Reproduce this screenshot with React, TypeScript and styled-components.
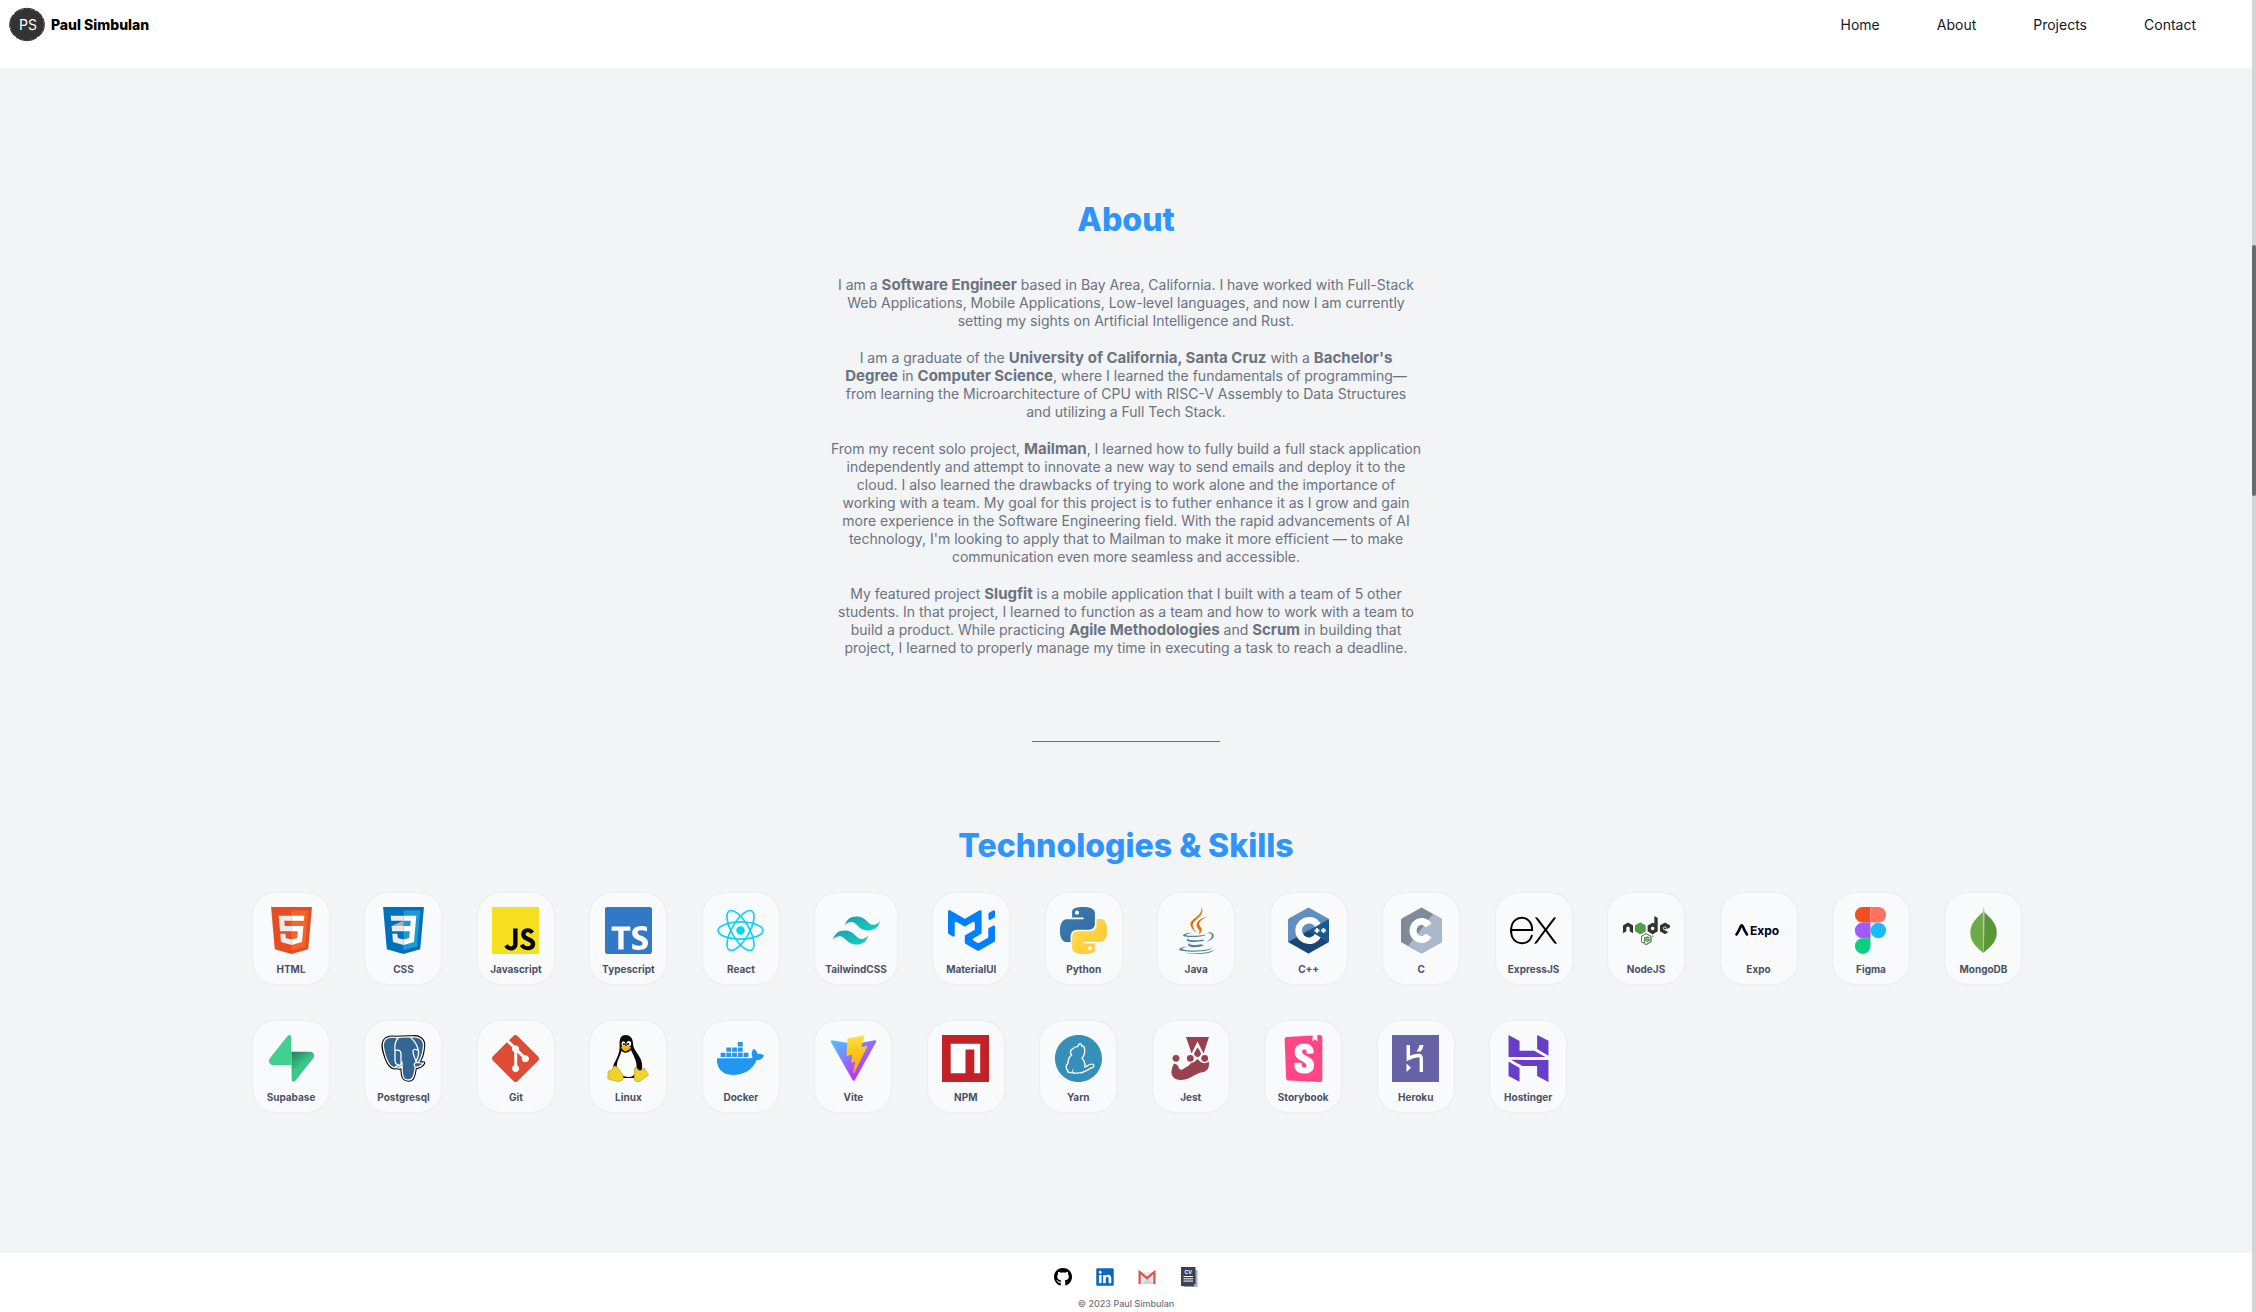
import React from "react";
import styled, { createGlobalStyle } from "styled-components";
import {
  SiExpress,
  SiGit,
  SiHostinger,
  SiJavascript,
  SiMui,
  SiStorybook,
  SiTypescript,
  SiYarn,
} from "react-icons/si";
import { FaDocker, FaGithub, FaJava, FaLinkedin, FaNode } from "react-icons/fa";

const GlobalStyle = createGlobalStyle`
  *, *::before, *::after { box-sizing: border-box; }
  body {
    margin: 0;
    padding-right: 4px;
    background: #f2f4f6;
    color: #111827;
    font-family: Inter, "Liberation Sans", sans-serif;
    font-size: 14px;
    line-height: 18px;
  }
`;

const Page = styled.div`
  display: flex;
  flex-direction: column;
  min-height: 100vh;
`;

const Header = styled.header`
  display: flex;
  align-items: center;
  justify-content: space-between;
  padding: 7px 56px 25px 9px;
  background: #fff;
`;

const Brand = styled.a`
  display: flex;
  align-items: center;
  gap: 6px;
  color: #000;
  font-size: 14px;
  font-weight: 800;
  text-decoration: none;
`;

const Nav = styled.nav`
  display: flex;
  gap: 57px;
`;

const NavLink = styled.a`
  color: #111827;
  font-size: 14px;
  text-decoration: none;
`;

const Main = styled.main`
  display: flex;
  flex: 1;
  flex-direction: column;
  align-items: center;
  padding-top: 132px;
`;

const Heading = styled.h2`
  margin: 0;
  color: #2f95fd;
  font-size: 32px;
  font-weight: 800;
  line-height: 40px;
`;

const Bio = styled.div`
  display: flex;
  flex-direction: column;
  gap: 19px;
  max-width: 592px;
  margin-top: 36px;
  color: #6b7280;
  font-size: 14px;
  text-align: center;

  p { margin: 0; }
  b { font-size: 15px; line-height: 16px; }
`;

const Divider = styled.hr`
  width: 188px;
  margin: 84px 0;
  border: 0;
  border-top: 1px solid #6b7280;
`;

const SkillList = styled.ul`
  display: flex;
  flex-wrap: wrap;
  gap: 37px 2.05%;
  width: 100%;
  margin: 27px 0 0;
  padding: 0 220px 0 253px;
  list-style: none;
`;

const SkillCard = styled.li`
  display: flex;
  flex-direction: column;
  align-items: center;
  gap: 7px;
  min-width: 76px;
  padding: 14px 10px 7px;
  border-radius: 22px;
  background: #f9fafc;
  box-shadow: 0 0 2px rgba(0, 0, 0, 0.1);
  color: #4b5066;
  font-size: 10px;
  font-weight: 700;
  line-height: 16px;

  svg { display: block; width: 47px; height: 47px; }
`;

const Backed = styled.span<{ $color: string; $back: string }>`
  display: block;
  padding: 2px;
  color: ${(p) => p.$color};
  background: linear-gradient(${(p) => p.$back}, ${(p) => p.$back}) content-box;
  svg { margin: -2px; }
`;

const Footer = styled.footer`
  display: flex;
  flex-direction: column;
  align-items: center;
  gap: 8px;
  padding: 14px 0 0;
  height: 59px;
  background: #fff;
  color: #6b7280;
  font-size: 9px;
  font-weight: 500;
`;

const Socials = styled.div`
  display: flex;
  gap: 24px;

  a { display: block; color: #000; }
  svg { display: block; width: 18px; height: 20px; }
`;

const ScrollTrack = styled.div`
  position: fixed;
  top: 0;
  right: 0;
  bottom: 0;
  width: 4px;
  padding-top: 245px;
  background: #d4d4d4;
`;

const ScrollThumb = styled.div`
  height: 251px;
  border-radius: 2px;
  background: #6b6b6b;
`;

const BrandMark = () => (
  <svg width="36" height="36" viewBox="0 0 36 36" aria-hidden="true">
    <ellipse cx="18" cy="17.5" rx="17" ry="15.8" fill="#333" />
    <ellipse cx="18" cy="17.5" rx="17.4" ry="16.2" fill="none" stroke="#333" strokeWidth="1" strokeDasharray="14 2 22 1 9 1" />
    <text x="19" y="23" fill="#fff" fontSize="14" fontWeight="400" textAnchor="middle">PS</text>
  </svg>
);

const Html = () => (
  <svg viewBox="0 0 115 115">
    <g transform="translate(-.7 -1.500) scale(.91 .92)">
      <path fill="#E44D26" d="M19.037 113.876L9.032 1.661h109.936l-10.016 112.198-45.019 12.480z" />
      <path fill="#F16529" d="M64 116.800l36.378-10.086 8.559-95.878H64z" />
      <path fill="#EBEBEB" d="M64 52.455H45.788L44.530 38.361H64V24.599H29.489l.33 3.692 3.382 37.927H64zm0 35.743l-.061.017-15.327-4.140-.979-10.975H33.816l1.928 21.609 28.193 7.826.063-.017z" />
      <path fill="#fff" d="M63.952 52.455v13.763h16.947l-1.597 17.849-15.350 4.143v14.319l28.215-7.820.207-2.325 3.234-36.233.335-3.696h-3.708zm0-27.856v13.762h33.244l.276-3.092.628-6.978.329-3.692z" />
    </g>
  </svg>
);

const Css = () => (
  <svg viewBox="0 0 115 115">
    <g transform="translate(-.7 -1.500) scale(.91 .92)">
      <path fill="#0070BA" d="M19.037 113.876L9.032 1.661h109.936l-10.016 112.198-45.019 12.480z" />
      <path fill="#1C9AD6" d="M64 116.800l36.378-10.086 8.559-95.878H64z" />
      <path fill="#EBEBEB" d="M64 24.600H29.500l1.200 13.800H64zM64 52.400H32l1.200 13.800H64zM64 88.200l-15.400-4.100-1-11H33.800l1.900 21.600L64 102.500z" />
      <path fill="#B3B3B3" d="M64 38.400v14H32z" />
      <path fill="#fff" d="M64 24.600h34.500l-1.300 13.800L94.600 66.200l-2.400 28.500L64 102.500V88.200l15.300-4.100 1.600-17.900H64V52.400h18.200l1.300-14H64z" />
    </g>
  </svg>
);

const ReactLogo = () => (
  <svg viewBox="0 0 48 48" fill="none" stroke="#08D5F8" strokeWidth="1.700">
    <circle cx="24" cy="24" r="4.300" fill="#08D5F8" stroke="none" />
    {[0, 60, 120].map((a) => (
      <ellipse key={a} cx="24" cy="24" rx="23" ry="8.800" transform={`rotate(${a} 24 24)`} />
    ))}
  </svg>
);

const Tailwind = () => (
  <svg viewBox="0 0 24 24">
    <defs>
      <linearGradient id="tw" x1="0" y1="0" x2="1" y2="1">
        <stop offset="0" stopColor="#2298BD" />
        <stop offset="1" stopColor="#0ED7B5" />
      </linearGradient>
    </defs>
    <path fill="url(#tw)" d="M12.001 4.800c-3.200 0-5.200 1.600-6 4.800 1.200-1.600 2.600-2.200 4.200-1.800.913.228 1.565.89 2.288 1.624C13.666 10.618 15.027 12 18.001 12c3.200 0 5.200-1.600 6-4.800-1.200 1.600-2.600 2.200-4.200 1.800-.913-.228-1.565-.89-2.288-1.624C16.337 6.182 14.976 4.800 12.001 4.800z" />
    <path fill="url(#tw)" d="M6.001 12c-3.200 0-5.200 1.600-6 4.800 1.200-1.600 2.600-2.200 4.200-1.800.913.228 1.565.89 2.288 1.624 1.177 1.194 2.538 2.576 5.512 2.576 3.200 0 5.200-1.600 6-4.800-1.200 1.600-2.600 2.200-4.200 1.800-.913-.228-1.565-.89-2.288-1.624C10.337 13.382 8.976 12 6.001 12z" />
  </svg>
);

const Python = () => (
  <svg viewBox="0 0 24 24">
    <defs>
      <linearGradient id="pyBlue" x1="0" y1="0" x2="1" y2="1">
        <stop offset="0" stopColor="#387EB8" />
        <stop offset="1" stopColor="#366994" />
      </linearGradient>
      <linearGradient id="pyGold" x1="0" y1="0" x2="1" y2="1">
        <stop offset="0" stopColor="#FFE052" />
        <stop offset="1" stopColor="#FFC331" />
      </linearGradient>
    </defs>
    <path fill="url(#pyBlue)" d="M14.25.18l.9.2.73.26.59.3.45.32.34.34.25.34.16.33.1.3.04.26.02.2-.01.13V8.5l-.05.63-.13.55-.21.46-.26.38-.3.31-.33.25-.35.19-.35.14-.33.1-.3.07-.26.04-.21.02H8.770l-.69.05-.59.14-.5.22-.41.27-.33.32-.27.35-.2.36-.15.37-.1.35-.07.32-.04.27-.02.21v3.060H3.170l-.21-.03-.28-.07-.32-.12-.35-.18-.36-.26-.36-.36-.35-.46-.32-.59-.28-.73-.21-.88-.14-1.050-.05-1.230.06-1.220.16-1.040.24-.87.32-.71.36-.57.4-.44.42-.33.42-.24.4-.16.36-.1.32-.05.24-.01h.16l.06.01h8.160v-.83H6.180l-.01-2.750-.02-.37.05-.34.11-.31.17-.28.25-.26.31-.23.38-.2.44-.18.51-.15.58-.12.64-.1.71-.06.77-.04.84-.02 1.270.05zm-6.300 1.980l-.23.33-.08.41.08.41.23.34.33.22.41.09.41-.09.33-.22.23-.34.08-.41-.08-.41-.23-.33-.33-.22-.41-.09-.41.09z" />
    <path fill="url(#pyGold)" d="M21.040 6.110l.28.06.32.12.35.18.36.27.36.35.35.47.32.59.28.73.21.88.14 1.040.05 1.230-.06 1.230-.16 1.040-.24.86-.32.71-.36.57-.4.45-.42.33-.42.24-.4.16-.36.09-.32.05-.24.02-.16-.01h-8.220v.82h5.840l.01 2.760.02.36-.05.34-.11.31-.17.29-.25.25-.31.24-.38.2-.44.17-.51.15-.58.13-.64.09-.71.07-.77.04-.84.01-1.270-.04-1.070-.14-.9-.2-.73-.25-.59-.3-.45-.33-.34-.34-.25-.34-.16-.33-.1-.3-.04-.25-.02-.2.01-.13v-5.340l.05-.64.13-.54.21-.46.26-.38.3-.32.33-.24.35-.2.35-.14.33-.1.3-.06.26-.04.21-.02.13-.01h5.840l.69-.05.59-.14.5-.21.41-.28.33-.32.27-.35.2-.36.15-.36.1-.35.07-.32.04-.28.02-.21V6.070h2.090l.14.01zm-6.470 14.250l-.23.33-.08.41.08.41.23.33.33.23.41.08.41-.08.33-.23.23-.33.08-.41-.08-.41-.23-.33-.33-.23-.41-.08-.41.08z" />
  </svg>
);

const Java = () => (
  <svg viewBox="0 0 47 47">
    <defs>
      <clipPath id="javaSteam"><rect width="47" height="26.500" /></clipPath>
      <clipPath id="javaCup"><path d="M0 25H19V27H26V25H47V47H0z" /></clipPath>
    </defs>
    <g clipPath="url(#javaCup)"><FaJava color="#5382A1" size={47} /></g>
    <g clipPath="url(#javaSteam)"><FaJava color="#E76F00" size={47} /></g>
  </svg>
);

const CHex = ({ plus = false }: { plus?: boolean }) => (
  <svg viewBox="0 0 47 47">
    <path fill={plus ? "#5E8FC0" : "#7F8B99"} d="M23.500.6L43.200 11.500Q44 12 44 13V34Q44 35 43.200 35.500L23.500 46.400 3.800 35.500Q3 35 3 34V13Q3 12 3.800 11.500z" />
    <path fill={plus ? "#1A4674" : "#A9B9CB"} d={plus ? "M3.400 35L23.500 23.500 43.600 35 23.500 46.400z" : "M10.500 38.500L35 7l8.200 4.500Q44 12 44 13V34Q44 35 43.200 35.500L23.500 46.400z"} />
    {plus && <path fill="#1B598E" d="M43.600 12.200L23.500 23.500 43.600 35Q44 34.500 44 34V13z" />}
    <path fill="none" stroke="#fff" strokeWidth={plus ? 6.600 : 7} d={plus ? "M32.800 18.200A10.300 10.300 0 1 0 32.800 28.800" : "M30.600 18.500A8.500 9 0 1 0 30.600 28.500"} />
    {plus && <path stroke="#fff" strokeWidth="1.800" d="M29.500 23.500H34.500M32 21V26M36 23.500H41M38.500 21V26" />}
  </svg>
);

const NodeLogo = () => (
  <svg viewBox="0 0 47 47">
    <defs>
      <clipPath id="nodeGreen"><path d="M12.500 12H23V27.500H30V40H16V28H12.500z" /></clipPath>
    </defs>
    <FaNode color="#333" size={47} />
    <g clipPath="url(#nodeGreen)"><FaNode color="#4FA046" size={47} /></g>
  </svg>
);

const Expo = () => (
  <svg viewBox="0 0 47 47">
    <path fill="none" stroke="#000020" strokeWidth="2.600" strokeLinecap="round" strokeLinejoin="round" d="M1.500 27.500Q4 24 5.600 19.500Q6.700 17 7.800 19.500Q9.500 24 12 27.500" />
    <text x="15" y="28" fill="#000020" fontSize="12" fontWeight="700">Expo</text>
  </svg>
);

const Figma = () => (
  <svg viewBox="0 0 47 47">
    <path fill="#F24E1E" d="M23.500 0H15.700a7.800 7.800 0 0 0 0 15.600H23.500z" />
    <path fill="#FF7262" d="M23.500 0H31.300a7.800 7.800 0 0 1 0 15.600H23.500z" />
    <path fill="#A259FF" d="M23.500 15.600H15.700a7.800 7.800 0 0 0 0 15.700H23.500z" />
    <circle cx="31.300" cy="23.500" r="7.800" fill="#1ABCFE" />
    <path fill="#0ACF83" d="M23.500 31.300H15.700A7.800 7.800 0 1 0 23.500 39.100z" />
  </svg>
);

const Mongo = () => (
  <svg viewBox="0 0 47 47">
    <path fill="#6CAC48" d="M23.500 4C20 9 10.300 14 10.300 26C10.300 37 20 42.500 23.300 46z" />
    <path fill="#599636" d="M23.500 4C27 9 36.800 14 36.800 25.500C36.800 37 27 42 23.300 46z" />
    <path fill="#C2BFBF" d="M23.500 0Q24.800 3 24.600 7L23.900 44H23.200L22.700 6z" />
  </svg>
);

const Supabase = () => (
  <svg viewBox="0 0 109 113">
    <defs>
      <linearGradient id="sb" gradientUnits="userSpaceOnUse" x1="54" y1="38" x2="80" y2="72">
        <stop offset="0" stopColor="#217A51" />
        <stop offset="1" stopColor="#3CC78A" />
      </linearGradient>
    </defs>
    <path fill="url(#sb)" d="M63.708 110.284C60.848 113.885 55.050 111.912 54.981 107.314L53.974 40.063H99.194C107.384 40.063 111.952 49.523 106.859 55.937z" />
    <path fill="#41D08F" d="M45.317 2.071C48.177-1.530 53.975.443 54.043 5.041L54.485 72.292H9.831C1.640 72.292-2.928 62.832 2.166 56.418z" />
  </svg>
);

const elephant =
  "M16 2.500C22 2 28 1.800 32 2C39 1 44 4.500 43.500 11C43 17 41 24 38.500 27.500Q41 28.500 43.500 28Q42 31.500 35.500 32.500C34 36 35 45 28.500 45C21.500 45 22.500 38 22 32.500Q19 33.500 16.500 32.500C12 34 9 30 6.500 24C4 17 1.500 9.500 4.500 5.500C7 2 12 1.800 16 2.500z";

const Postgres = () => (
  <svg viewBox="0 0 47 47">
    <path fill="#336791" stroke="#000" strokeWidth="3.400" strokeLinejoin="round" d={elephant} />
    <path fill="#336791" stroke="#fff" strokeWidth="1.300" strokeLinejoin="round" d={elephant} />
    <path fill="none" stroke="#fff" strokeWidth="1.300" strokeLinecap="round" d="M18 3Q14 8 15 15V25Q15 29 18 30Q22 31 21 25V18Q20 14 15 15.500M15.500 32Q18 29 22 32.500V27M31 3Q36 7 38 14Q40 19 35.500 27.500L38.500 27.500M37.500 15Q33 13 33 17Q33.500 21 36 26M35.500 27.500Q33 30 35.500 32.500" />
  </svg>
);

const Tux = () => (
  <svg viewBox="0 0 47 47">
    <path fill="#0b0b0b" d="M20.500 0C25 0 27.800 3 28 8C28.200 13.500 31 16 34 21C37 26 37.500 29 37 34L34 43H12L9 36C7 33 8.500 29 11 25C14 19 15 15 14.600 9C14.300 3 16.500 0 20.500 0z" />
    <path fill="#fdfdfd" d="M16.500 16C20 19 23 18 26 15C28 20 31 24 31.500 30C32 36 30 42 24 42C17 42 12.500 38 12 33C11 27 15 22 16.500 16z" />
    <ellipse cx="18.400" cy="8.800" rx="1.900" ry="2.600" fill="#fff" />
    <ellipse cx="23.800" cy="8.800" rx="2.300" ry="2.700" fill="#fff" />
    <circle cx="18.900" cy="9.200" r="1" />
    <circle cx="23.200" cy="9.200" r="1.100" />
    <path fill="#F5BD0C" d="M16 12Q20 9 26 12.200Q26 14 21 16.300Q17 16 16 12z" />
    <path fill="none" stroke="#B8860B" strokeWidth=".6" d="M16.500 13Q20.500 16 25.500 12.800" />
    <path fill="#F0D22C" stroke="#9c8417" strokeWidth=".5" d="M7.500 31C10.500 31 12.500 35 15.500 39.500C18 44 14 47.300 10 46.300C6 45 3.500 45.200 1.500 44C0 43 1.300 41 1 38.500C.7 36 2 35.700 4 35.500C6 34.500 5.800 31 7.500 31z" transform="translate(2)" />
    <path fill="#F0D22C" stroke="#9c8417" strokeWidth=".5" d="M27.500 34C28 31.500 29.500 32.500 30.500 34C32 36 34.500 36 36 33.500C38 31 37.800 35 39.500 37C41 38.500 42.500 39.300 40.500 41C37 42.500 35.500 44.500 33.500 46C30 47.600 27 46 27 43C27.500 40 27 37 27.500 34z" transform="translate(2)" />
  </svg>
);

const Vite = () => (
  <svg viewBox="5 0 400 404">
    <defs>
      <linearGradient id="viteV" gradientUnits="userSpaceOnUse" x1="6" y1="33" x2="235" y2="344">
        <stop offset="0" stopColor="#41D1FF" />
        <stop offset="1" stopColor="#BD34FE" />
      </linearGradient>
      <linearGradient id="viteBolt" gradientUnits="userSpaceOnUse" x1="194" y1="9" x2="236" y2="293">
        <stop offset="0" stopColor="#FFEA83" />
        <stop offset=".083" stopColor="#FFDD35" />
        <stop offset="1" stopColor="#FFA800" />
      </linearGradient>
    </defs>
    <path fill="url(#viteV)" d="M399.641 59.525L215.643 388.545C211.844 395.338 202.084 395.378 198.228 388.618L10.582 59.556C6.381 52.190 12.680 43.267 21.028 44.759L205.223 77.682C206.398 77.892 207.601 77.890 208.776 77.676L389.119 44.806C397.439 43.289 403.768 52.143 399.641 59.525z" />
    <path fill="url(#viteBolt)" d="M292.965 1.574L156.801 28.255C154.563 28.694 152.906 30.590 152.771 32.866L144.395 174.330C144.198 177.662 147.258 180.248 150.510 179.498L188.420 170.749C191.967 169.931 195.172 173.055 194.443 176.622L183.180 231.775C182.422 235.487 185.907 238.661 189.532 237.560L212.947 230.446C216.577 229.344 220.065 232.527 219.297 236.242L201.398 322.875C200.278 328.294 207.486 331.249 210.492 326.603L212.500 323.500L323.454 102.072C325.312 98.365 322.108 94.137 318.036 94.923L279.014 102.454C275.347 103.161 272.227 99.746 273.262 96.158L298.731 7.867C299.767 4.273 296.636.855 292.965 1.574z" />
  </svg>
);

const Npm = () => (
  <svg viewBox="0 0 47 47">
    <path fill="#C12127" d="M0 0H47V47H0z" />
    <path fill="#fff" d="M8.700 8.700H38.200V38.200H32.300V14.500H23.500V38.200H8.700z" />
  </svg>
);

const Jest = () => (
  <svg viewBox="0 0 47 47">
    <path fill="#99424F" d="M19 2H42L36.600 18.500L30.500 6.500L24.600 18.500z" />
    <path fill="#99424F" d="M30.500 12.500Q34 17 34 19Q33 22 30.500 22Q28 22 27 19Q27.500 17 30.500 12.500z" />
    <circle cx="9" cy="23.300" r="3.400" fill="#99424F" />
    <circle cx="23.300" cy="23.300" r="3.400" fill="#99424F" />
    <circle cx="37.700" cy="23.300" r="3.400" fill="#99424F" />
    <path fill="#99424F" d="M7 28.500Q10.500 29 11.500 32Q12.500 36.500 17 33.500Q22.500 30.500 24 28Q28.500 27 30.500 24Q33 27.500 37 28.200Q40 28.200 41.800 26.500Q43 34.500 37.500 36.800Q32 37.500 27 40.500Q20 45 13 45Q4.500 44 4.300 37Q4.800 32 7 28.500z" />
  </svg>
);

const Heroku = () => (
  <svg viewBox="0 0 47 47">
    <path fill="#6762A6" d="M0 0H47V47H0z" />
    <path fill="none" stroke="#fff" strokeWidth="3.400" d="M16.300 10V23.500Q22 20.500 26.500 20.500Q29.300 20.500 29.300 24V37" />
    <path fill="#fff" d="M14.500 28.500L19 32.700 14.500 37zM27.500 10H31.500Q31 14 28.500 16.500H24.500Q27 13.500 27.500 10z" />
  </svg>
);

const Gmail = () => (
  <svg viewBox="0 0 18 20">
    <path fill="#E9E9E9" d="M1 5H17V17H1z" />
    <path fill="#D4D4D4" d="M4 17L9 11L17 17z" />
    <path fill="none" stroke="#DE524C" strokeWidth="2.200" d="M1.600 17V5L9 11.200L16.400 5V17" />
  </svg>
);

const Cv = () => (
  <svg viewBox="0 0 18 20">
    <path fill="#A7ADBA" d="M14 3H17.500V20H4V17z" />
    <path fill="#3A4254" d="M1 0H15.500V17H3V19H1z" />
    <path fill="#3A4254" d="M2 17H14V19.200H2z" />
    <text x="8.300" y="7" fill="#fff" fontSize="5" fontWeight="700" textAnchor="middle">CV</text>
    <path stroke="#fff" strokeWidth="1" d="M3.500 9.500H13M3.500 11.800H13M3.500 14.100H13" />
  </svg>
);

const skills: [string, React.ReactNode][] = [
  ["HTML", <Html />],
  ["CSS", <Css />],
  ["Javascript", <Backed $color="#F5DF1E" $back="#000"><SiJavascript /></Backed>],
  ["Typescript", <Backed $color="#3178C6" $back="#fff"><SiTypescript /></Backed>],
  ["React", <ReactLogo />],
  ["TailwindCSS", <Tailwind />],
  ["MaterialUI", <SiMui color="#007FFF" />],
  ["Python", <Python />],
  ["Java", <Java />],
  ["C++", <CHex plus />],
  ["C", <CHex />],
  ["ExpressJS", <SiExpress color="#000" />],
  ["NodeJS", <NodeLogo />],
  ["Expo", <Expo />],
  ["Figma", <Figma />],
  ["MongoDB", <Mongo />],
  ["Supabase", <Supabase />],
  ["Postgresql", <Postgres />],
  ["Git", <SiGit color="#DE4C36" />],
  ["Linux", <Tux />],
  ["Docker", <FaDocker color="#2396ED" />],
  ["Vite", <Vite />],
  ["NPM", <Npm />],
  ["Yarn", <SiYarn color="#368FB9" />],
  ["Jest", <Jest />],
  ["Storybook", <SiStorybook color="#FF4785" />],
  ["Heroku", <Heroku />],
  ["Hostinger", <SiHostinger color="#673DC9" />],
];

export default function App() {
  return (
    <>
      <GlobalStyle />
      <Page>
        <Header>
          <Brand href="#home">
            <BrandMark />
            Paul Simbulan
          </Brand>
          <Nav>
            <NavLink href="#home">Home</NavLink>
            <NavLink href="#about">About</NavLink>
            <NavLink href="#projects">Projects</NavLink>
            <NavLink href="#contact">Contact</NavLink>
          </Nav>
        </Header>
        <Main>
          <Heading>About</Heading>
          <Bio>
            <p>
              I am a <b>Software Engineer</b> based in Bay Area, California. I have worked with Full-Stack
              <br />
              Web Applications, Mobile Applications, Low-level languages, and now I am currently
              <br />
              setting my sights on Artificial Intelligence and Rust.
            </p>
            <p>
              I am a graduate of the <b>University of California, Santa Cruz</b> with a <b>Bachelor's</b>
              <br />
              <b>Degree</b> in <b>Computer Science</b>, where I learned the fundamentals of programming—
              <br />
              from learning the Microarchitecture of CPU with RISC-V Assembly to Data Structures
              <br />
              and utilizing a Full Tech Stack.
            </p>
            <p>
              From my recent solo project, <b>Mailman</b>, I learned how to fully build a full stack application
              <br />
              independently and attempt to innovate a new way to send emails and deploy it to the
              <br />
              cloud. I also learned the drawbacks of trying to work alone and the importance of
              <br />
              working with a team. My goal for this project is to futher enhance it as I grow and gain
              <br />
              more experience in the Software Engineering field. With the rapid advancements of AI
              <br />
              technology, I'm looking to apply that to Mailman to make it more efficient — to make
              <br />
              communication even more seamless and accessible.
            </p>
            <p>
              My featured project <b>Slugfit</b> is a mobile application that I built with a team of 5 other
              <br />
              students. In that project, I learned to function as a team and how to work with a team to
              <br />
              build a product. While practicing <b>Agile Methodologies</b> and <b>Scrum</b> in building that
              <br />
              project, I learned to properly manage my time in executing a task to reach a deadline.
            </p>
          </Bio>
          <Divider />
          <Heading>Technologies &amp; Skills</Heading>
          <SkillList>
            {skills.map(([name, icon]) => (
              <SkillCard key={name}>
                {icon}
                {name}
              </SkillCard>
            ))}
          </SkillList>
        </Main>
        <Footer>
          <Socials>
            <a href="#github" aria-label="GitHub"><FaGithub /></a>
            <a href="#linkedin" aria-label="LinkedIn"><FaLinkedin color="#0F65BF" /></a>
            <a href="#mail" aria-label="Email"><Gmail /></a>
            <a href="#cv" aria-label="Resume"><Cv /></a>
          </Socials>
          © 2023 Paul Simbulan
        </Footer>
      </Page>
      <ScrollTrack aria-hidden="true">
        <ScrollThumb />
      </ScrollTrack>
    </>
  );
}
